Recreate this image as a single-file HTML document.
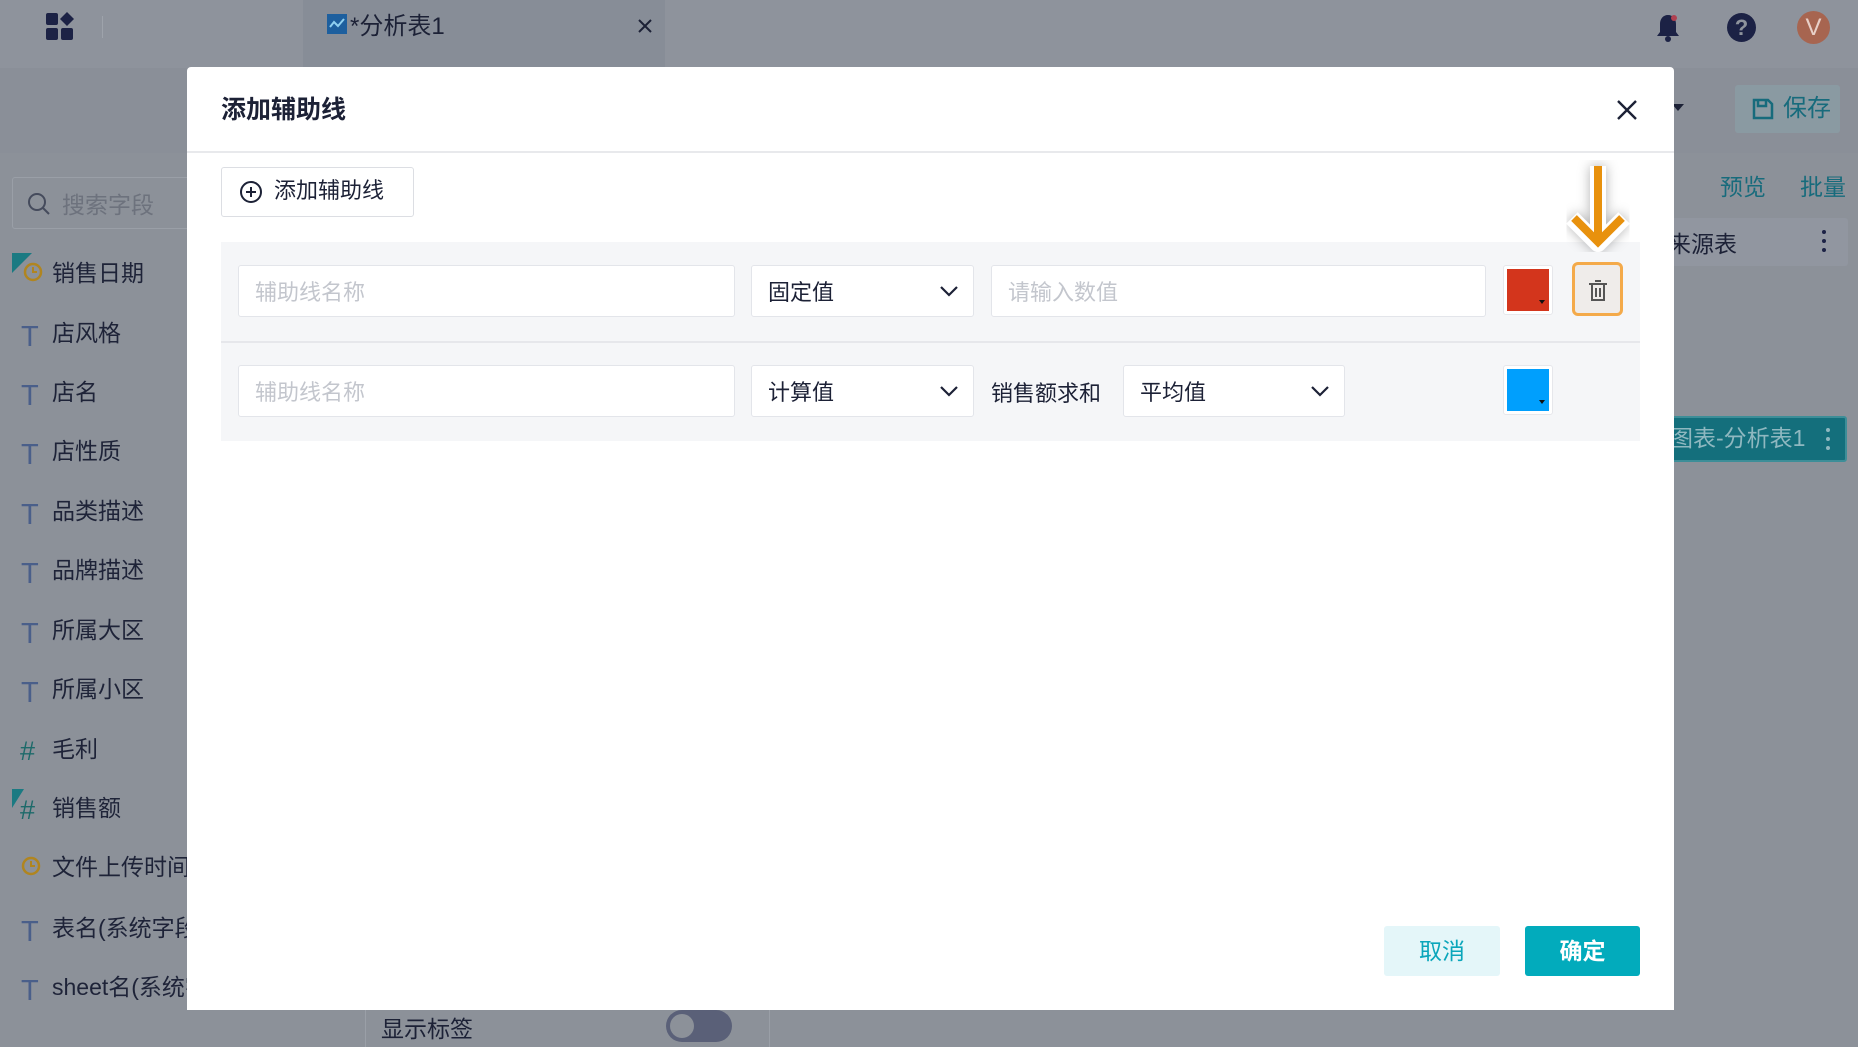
<!DOCTYPE html>
<html><head><meta charset="utf-8"><style>
*{box-sizing:border-box;margin:0;padding:0}
body{width:1858px;height:1047px;position:relative;overflow:hidden;background:#8c9199;font-family:"Liberation Sans","Noto Sans CJK SC",sans-serif;color:#1c2136}
.a{position:absolute}
.side{font-size:23px;color:#1e2338}
.inp{position:absolute;background:#fff;border:1px solid #e3e5ea;border-radius:3px;font-size:22px;padding-left:16px;display:flex;align-items:center}
.ph{color:#c3c6cd}
.chev{position:absolute;right:14px;top:50%;margin-top:-7px}
.T{position:absolute;left:21px;font-size:29px;color:#4a5f8a;font-family:"Liberation Sans",sans-serif;margin-top:7px}
</style></head><body>
<div class="a" style="left:0;top:0;width:1858px;height:68px;background:#8e939c"></div>
<div class="a" style="left:303px;top:0;width:362px;height:68px;background:#878d97"></div>
<svg class="a" style="left:44px;top:12px" width="34" height="30"><rect x="2" y="1" width="12" height="12" rx="2" fill="#1c2245"/><rect x="2" y="16" width="12" height="12" rx="2" fill="#1c2245"/><rect x="17" y="16" width="12" height="12" rx="2" fill="#1c2245"/><path d="M23 0 L30 7 L23 14 L16 7Z" fill="#1c2245"/></svg>
<div class="a" style="left:102px;top:16px;width:1px;height:22px;background:#9ea3ab"></div>
<svg class="a" style="left:327px;top:14px" width="20" height="20"><rect width="20" height="20" fill="#1d5f9e"/><path d="M3 13 L7 8 L11 12 L17 5" stroke="#8fd0f0" stroke-width="2" fill="none"/></svg>
<div class="a" style="left:350px;top:6px;font-size:24px;color:#1c2136">*分析表1</div>
<svg class="a" style="left:637px;top:18px" width="16" height="16"><path d="M2 2L14 14M14 2L2 14" stroke="#1c2136" stroke-width="2"/></svg>
<svg class="a" style="left:1655px;top:12px" width="26" height="32"><path d="M13 3c-5 0-8 4-8 9v8l-3 4h22l-3-4v-8c0-5-3-9-8-9z" fill="#1c2245"/><circle cx="13" cy="27" r="3" fill="#1c2245"/><circle cx="19" cy="6" r="3" fill="#b04050"/></svg>
<div class="a" style="left:1727px;top:13px;width:29px;height:29px;border-radius:50%;background:#1c2245;color:#8e939c;font-size:22px;font-weight:bold;text-align:center;line-height:29px">?</div>
<div class="a" style="left:1797px;top:11px;width:33px;height:33px;border-radius:50%;background:#a76550;color:#e8d0c8;font-size:24px;text-align:center;line-height:33px">V</div>
<div class="a" style="left:0;top:68px;width:1858px;height:85px;background:#8a8f98"></div>
<div class="a" style="left:1735px;top:85px;width:105px;height:48px;background:#8a9aa2;border-radius:3px;color:#176b7c;font-size:24px;line-height:48px;padding-left:48px">保存</div>
<svg class="a" style="left:1752px;top:98px" width="22" height="22"><path d="M2 2h14l4 4v14H2z" fill="none" stroke="#176b7c" stroke-width="2.5"/><path d="M6 2v6h8V2" fill="none" stroke="#176b7c" stroke-width="2.5"/></svg>
<div class="a" style="left:1672px;top:104px;border:6px solid transparent;border-top:7px solid #1c2136"></div>
<div class="a" style="left:12px;top:177px;width:180px;height:52px;border:1px solid #9a9fa7;border-radius:3px"></div>
<svg class="a" style="left:27px;top:192px" width="24" height="24"><circle cx="10" cy="10" r="8" fill="none" stroke="#454b5c" stroke-width="2"/><path d="M16 16L22 22" stroke="#454b5c" stroke-width="2"/></svg>
<div class="a" style="left:62px;top:186px;font-size:23px;color:#6d727d">搜索字段</div>
<div class="side">
<div class="a" style="left:52px;top:254px">销售日期</div>
<div class="a" style="left:52px;top:314px">店风格</div>
<div class="a" style="left:52px;top:373px">店名</div>
<div class="a" style="left:52px;top:432px">店性质</div>
<div class="a" style="left:52px;top:492px">品类描述</div>
<div class="a" style="left:52px;top:551px">品牌描述</div>
<div class="a" style="left:52px;top:611px">所属大区</div>
<div class="a" style="left:52px;top:670px">所属小区</div>
<div class="a" style="left:52px;top:730px">毛利</div>
<div class="a" style="left:52px;top:789px">销售额</div>
<div class="a" style="left:52px;top:848px">文件上传时间</div>
<div class="a" style="left:52px;top:909px">表名(系统字段)</div>
<div class="a" style="left:52px;top:968px">sheet名(系统字段)</div>
</div>
<div class="T" style="top:314px">T</div><div class="T" style="top:373px">T</div><div class="T" style="top:432px">T</div><div class="T" style="top:492px">T</div><div class="T" style="top:551px">T</div><div class="T" style="top:611px">T</div><div class="T" style="top:670px">T</div><div class="T" style="top:909px">T</div><div class="T" style="top:968px">T</div>
<div class="a" style="left:20px;top:736px;font-size:27px;color:#1d6a6a">#</div>
<div class="a" style="left:20px;top:795px;font-size:27px;color:#1d6a6a">#</div>
<svg class="a" style="left:12px;top:253px" width="40" height="34"><path d="M0 0h20L0 20z" fill="#1b7a82"/><circle cx="21" cy="19" r="8" fill="none" stroke="#b08520" stroke-width="2.5"/><path d="M21 14v5h4" stroke="#b08520" stroke-width="2" fill="none"/></svg>
<svg class="a" style="left:12px;top:789px" width="14" height="20"><path d="M0 0h12L0 19z" fill="#1b7a82"/></svg>
<svg class="a" style="left:20px;top:855px" width="22" height="22"><circle cx="11" cy="11" r="8" fill="none" stroke="#b08520" stroke-width="2.5"/><path d="M11 6v5h4" stroke="#b08520" stroke-width="2" fill="none"/></svg>
<div class="a" style="left:1720px;top:168px;font-size:23px;color:#176b7c">预览</div>
<div class="a" style="left:1800px;top:168px;font-size:23px;color:#176b7c">批量</div>
<div class="a" style="left:1660px;top:218px;width:188px;height:48px;background:#9196a0;border-radius:3px"></div>
<div class="a" style="left:1668px;top:225px;font-size:23px">来源表</div>
<div class="a" style="left:1822px;top:230px;width:4px;height:22px;border-left:4px dotted #1c2245"></div>
<div class="a" style="left:1660px;top:416px;width:187px;height:46px;background:#146f7c;border:2px solid #3d8e98;border-radius:3px;color:#8fb8c0;font-size:23px;line-height:40px;padding-left:8px">图表-分析表1</div>
<div class="a" style="left:1826px;top:428px;width:4px;height:22px;border-left:4px dotted #8fb8c0"></div>
<div class="a" style="left:365px;top:1010px;width:405px;height:37px;border-left:1px solid #9a9fa7;border-right:1px solid #9a9fa7"></div>
<div class="a" style="left:381px;top:1010px;font-size:23px">显示标签</div>
<div class="a" style="left:666px;top:1010px;width:66px;height:32px;border-radius:16px;background:#5a6078"></div>
<div class="a" style="left:670px;top:1014px;width:24px;height:24px;border-radius:50%;background:#8c9199"></div>
<div class="a" style="left:187px;top:67px;width:1487px;height:943px;background:#fff;border-radius:4px 4px 0 0"></div>
<div class="a" style="left:221px;top:90px;font-size:25px;font-weight:bold;color:#1c2136">添加辅助线</div>
<svg class="a" style="left:1616px;top:99px" width="22" height="22"><path d="M2 2L20 20M20 2L2 20" stroke="#1c2136" stroke-width="2.4"/></svg>
<div class="a" style="left:187px;top:151px;width:1487px;height:2px;background:#e8e9ec"></div>
<div class="a" style="left:221px;top:167px;width:193px;height:50px;border:1px solid #dcdee3;border-radius:3px;font-size:22px;line-height:46px;padding-left:52px;color:#1c2136">添加辅助线</div>
<svg class="a" style="left:239px;top:180px" width="24" height="24"><circle cx="12" cy="12" r="10" fill="none" stroke="#1c2136" stroke-width="2"/><path d="M12 7v10M7 12h10" stroke="#1c2136" stroke-width="2"/></svg>
<div class="a" style="left:221px;top:242px;width:1419px;height:199px;background:#f5f6f8"></div>
<div class="a" style="left:221px;top:341px;width:1419px;height:2px;background:#e6e7eb"></div>
<div class="inp" style="left:238px;top:265px;width:497px;height:52px"><span class="ph">辅助线名称</span></div>
<div class="inp" style="left:751px;top:265px;width:223px;height:52px">固定值<svg class="chev" width="20" height="14"><path d="M2 3L10 11L18 3" stroke="#1c2136" stroke-width="2.2" fill="none"/></svg></div>
<div class="inp" style="left:991px;top:265px;width:495px;height:52px"><span class="ph">请输入数值</span></div>
<div class="a" style="left:1503px;top:265px;width:50px;height:50px;background:#fff;border:1px solid #e6e7eb;border-radius:3px"><div style="margin:3px;width:42px;height:42px;background:#d3351c;position:relative"><div style="position:absolute;right:4px;bottom:4px;border:3px solid transparent;border-top:4px solid #111"></div></div></div>
<div class="a" style="left:1572px;top:262px;width:51px;height:54px;background:#efecea;border:3px solid #f4aa4a;border-radius:6px"></div>
<svg class="a" style="left:1586px;top:279px" width="24" height="24"><path d="M3 5h18M9 2h6M6 5v16h12V5M10 9v9M14 9v9" stroke="#555" stroke-width="2" fill="none"/></svg>
<svg class="a" style="left:1560px;top:160px" width="76" height="100"><defs><filter id="f"><feDropShadow dx="0" dy="0" stdDeviation="6" flood-opacity="0.3"/></filter></defs><g filter="url(#f)"><path d="M38 6V82M12 58L38 84L64 58" stroke="#fff" stroke-width="16" fill="none" stroke-linejoin="round"/><path d="M38 6V80M14 58L38 82L62 58" stroke="#e8910b" stroke-width="8" fill="none"/></g></svg>
<div class="inp" style="left:238px;top:365px;width:497px;height:52px"><span class="ph">辅助线名称</span></div>
<div class="inp" style="left:751px;top:365px;width:223px;height:52px">计算值<svg class="chev" width="20" height="14"><path d="M2 3L10 11L18 3" stroke="#1c2136" stroke-width="2.2" fill="none"/></svg></div>
<div class="a" style="left:991px;top:376px;font-size:22px;color:#1c2136">销售额求和</div>
<div class="inp" style="left:1123px;top:365px;width:222px;height:52px">平均值<svg class="chev" width="20" height="14"><path d="M2 3L10 11L18 3" stroke="#1c2136" stroke-width="2.2" fill="none"/></svg></div>
<div class="a" style="left:1503px;top:365px;width:50px;height:50px;background:#fff;border:1px solid #e6e7eb;border-radius:3px"><div style="margin:3px;width:42px;height:42px;background:#009ffd;position:relative"><div style="position:absolute;right:4px;bottom:4px;border:3px solid transparent;border-top:4px solid #111"></div></div></div>
<div class="a" style="left:1384px;top:926px;width:116px;height:50px;background:#e4f6f9;border-radius:3px;color:#0aa6bb;font-size:23px;text-align:center;line-height:50px">取消</div>
<div class="a" style="left:1525px;top:926px;width:115px;height:50px;background:#02abbc;border-radius:3px;color:#fff;font-size:23px;text-align:center;line-height:50px;font-weight:bold">确定</div>
</body></html>
